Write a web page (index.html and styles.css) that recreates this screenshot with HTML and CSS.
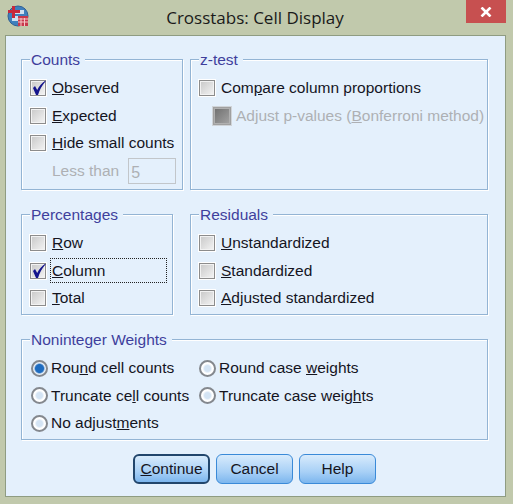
FILE: index.html
```html
<!DOCTYPE html>
<html lang="en">
<head>
    <meta charset="UTF-8">
    <title>Crosstabs: Cell Display</title>
    <link rel="stylesheet" href="styles.css">
</head>
<body>
    <div class="titlebar">
        <svg class="app-icon" width="22" height="22" viewBox="0 0 22 22">
            <circle cx="11" cy="11" r="10" fill="#3f7fbd" stroke="#2f5f95"/>
            <path d="M5 5h12v4H5zM5 11h9v5H5z" fill="#cfe0f0"/>
            <path d="M5 1h3v4h5v3H8v5H5V8H1V5h4z" fill="#c8283c"/>
            <rect x="11" y="11" width="10" height="10" fill="#c8384c"/>
            <path d="M11 14h10M11 17h10M14 13v8M17.500 13v8" stroke="#f4c8c8" stroke-width="1"/>
        </svg>
        <div class="title">Crosstabs: Cell Display</div>
        <div class="close">
            <svg width="12" height="10" viewBox="0 0 12 10"><path d="M1.500 0.500l9 9M10.500 0.500l-9 9" stroke="#fff" stroke-width="2.600"/></svg>
        </div>
    </div>

    <div class="panel">
        <div class="groups">
            <fieldset class="group tall">
                <legend>Counts</legend>
                <div class="row">
                    <span class="check"><svg width="16" height="16" viewBox="0 0 16 16"><path d="M3 8l2-2 2.200 4C9 6 12 3 15.500.5v1C12 5 9.500 10 8 15H6z" fill="#14148c"/></svg></span>
                    <span class="label"><u>O</u>bserved</span>
                </div>
                <div class="row">
                    <span class="check"></span>
                    <span class="label"><u>E</u>xpected</span>
                </div>
                <div class="row">
                    <span class="check"></span>
                    <span class="label"><u>H</u>ide small counts</span>
                </div>
                <div class="row less-than">
                    <span class="label off">Less than</span>
                    <span class="num-box">5</span>
                </div>
            </fieldset>

            <fieldset class="group tall">
                <legend>z-test</legend>
                <div class="row">
                    <span class="check"></span>
                    <span class="label">Com<u>p</u>are column proportions</span>
                </div>
                <div class="row sub">
                    <span class="check check-off"></span>
                    <span class="label off">Adjust p-values (<u>B</u>onferroni method)</span>
                </div>
            </fieldset>

            <fieldset class="group pct">
                <legend>Percentages</legend>
                <div class="row">
                    <span class="check"></span>
                    <span class="label"><u>R</u>ow</span>
                </div>
                <div class="row">
                    <span class="check"><svg width="16" height="16" viewBox="0 0 16 16"><path d="M3 8l2-2 2.200 4C9 6 12 3 15.500.5v1C12 5 9.500 10 8 15H6z" fill="#14148c"/></svg></span>
                    <span class="label focus"><u>C</u>olumn</span>
                </div>
                <div class="row">
                    <span class="check"></span>
                    <span class="label"><u>T</u>otal</span>
                </div>
            </fieldset>

            <fieldset class="group">
                <legend>Residuals</legend>
                <div class="row">
                    <span class="check"></span>
                    <span class="label"><u>U</u>nstandardized</span>
                </div>
                <div class="row">
                    <span class="check"></span>
                    <span class="label"><u>S</u>tandardized</span>
                </div>
                <div class="row">
                    <span class="check"></span>
                    <span class="label"><u>A</u>djusted standardized</span>
                </div>
            </fieldset>

            <fieldset class="group wide">
                <legend>Noninteger Weights</legend>
                <div class="radios">
                    <div class="row">
                        <span class="radio on"></span>
                        <span class="label">Rou<u>n</u>d cell counts</span>
                    </div>
                    <div class="row">
                        <span class="radio"></span>
                        <span class="label">Round case <u>w</u>eights</span>
                    </div>
                    <div class="row">
                        <span class="radio"></span>
                        <span class="label">Truncate ce<u>l</u>l counts</span>
                    </div>
                    <div class="row">
                        <span class="radio"></span>
                        <span class="label">Truncate case weig<u>h</u>ts</span>
                    </div>
                    <div class="row">
                        <span class="radio"></span>
                        <span class="label">No adjust<u>m</u>ents</span>
                    </div>
                </div>
            </fieldset>
        </div>

        <div class="buttons">
            <button class="btn default"><u>C</u>ontinue</button>
            <button class="btn">Cancel</button>
            <button class="btn">Help</button>
        </div>
    </div>
</body>
</html>
```

FILE: styles.css
```css
html, body {
    height: 100%;
}
body {
    margin: 0;
    background-color: #c1c9ac;
    font-family: 'Liberation Sans', Arial, sans-serif;
    font-size: 15.500px;
    color: #15151f;
    overflow: hidden;
}
.titlebar {
    height: 35px;
    display: flex;
    align-items: flex-start;
    padding-left: 7px;
    padding-right: 7px;
}
.app-icon {
    margin-top: 5px;
    flex: none;
}
.title {
    flex: 1;
    text-align: center;
    padding-top: 8px;
    padding-left: 15px;
    font-family: 'Open Sans', sans-serif;
    font-size: 17px;
    line-height: 20px;
    color: #1a1a1a;
}
.close {
    width: 40px;
    height: 23px;
    flex: none;
    background-color: #c75050;
    display: flex;
    align-items: center;
    justify-content: center;
}
.panel {
    width: 499px;
    height: 460px;
    margin-left: 5px;
    border: 1px solid #8f9c82;
    background-color: #e4f0fc;
}
.groups {
    display: grid;
    grid-template-columns: 162px 298px;
    column-gap: 7px;
    row-gap: 16px;
    padding: 15px 0 0 15px;
}
.group {
    box-sizing: border-box;
    margin: 0;
    min-width: 0;
    height: 109px;
    border: 1px solid #93b4d4;
    box-shadow: 1px 1px 0 #fff, inset 1px 1px 0 #fff;
    padding: 7.500px 0 0 8px;
}
.tall {
    height: 139px;
}
.pct {
    width: 152px;
}
.wide {
    grid-column: 1 / 3;
}
legend {
    margin-left: 0;
    padding: 0 5px 0 1px;
    height: 16px;
    line-height: 18px;
    background-color: #e4f0fc;
    color: #3f3f9c;
}
.row {
    height: 27.500px;
    display: flex;
    align-items: center;
}
.check {
    width: 14px;
    height: 14px;
    flex: none;
    margin-right: 6px;
    position: relative;
    border: 1px solid #8c8c8c;
    box-shadow: 0 0 0 1px #fff, inset 0 0 0 1px #f2f2f2;
    background: linear-gradient(135deg, #c8c8c8, #f4f4f4);
}
.check svg {
    position: absolute;
    left: -1px;
    top: -1px;
}
.check-off {
    width: 16px;
    height: 16px;
    margin-right: 5px;
    border-color: #a0a0a0;
    background: linear-gradient(135deg, #6e6e6e, #a4a4a4);
    box-shadow: 0 0 0 1px #d0d4d8, inset 0 0 0 1px #b0b0b0;
}
.radio {
    width: 13px;
    height: 13px;
    flex: none;
    margin-right: 3px;
    border-radius: 50%;
    border: 2px solid #84888e;
    background: radial-gradient(circle closest-side, #d4e4f4 45%, #fff 75%);
}
.radio.on {
    background: radial-gradient(circle closest-side, #1e6cc0 62%, #e8f0f8 85%);
}
.radios {
    display: grid;
    grid-template-columns: 168px 1fr;
}
.radios .row {
    padding-left: 1px;
}
.label {
    white-space: nowrap;
}
.off {
    color: #aeb0b4;
}
.focus {
    flex: 1;
    margin-left: -2px;
    margin-right: 5px;
    padding-left: 1px;
    line-height: 23px;
    border: 1px dotted #222;
}
.sub {
    padding-left: 14px;
}
.less-than {
    padding-left: 22px;
}
.num-box {
    box-sizing: border-box;
    width: 48px;
    height: 26px;
    margin-left: 9px;
    border: 1px solid #c2c6ca;
    color: #aeb0b4;
    font-size: 16px;
    line-height: 27px;
    padding-left: 2px;
}
.buttons {
    display: flex;
    justify-content: center;
    gap: 6px;
    padding-top: 14px;
    padding-right: 2px;
}
.btn {
    width: 77px;
    height: 30px;
    padding: 0;
    border: 1px solid #3a8ad8;
    border-radius: 6px;
    background: linear-gradient(#d8ebfc, #a8d0f6 60%, #7cb6ee);
    font-family: 'Liberation Sans', Arial, sans-serif;
    font-size: 15.500px;
    color: #15151f;
}
.default {
    border: 2px solid #22466c;
}
```
